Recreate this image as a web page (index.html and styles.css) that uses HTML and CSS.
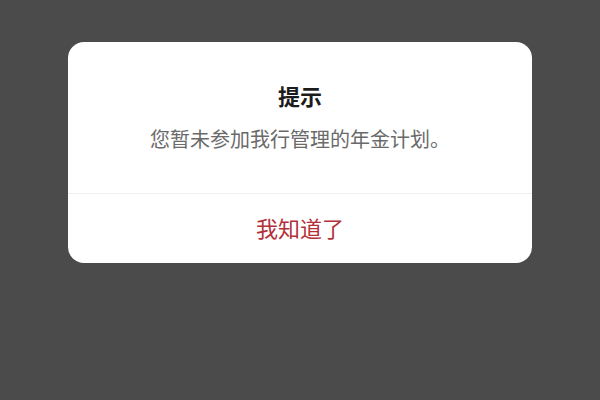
FILE: index.html
```html
<!DOCTYPE html>
<html lang="zh-CN">
<head>
<meta charset="utf-8">
<link rel="stylesheet" href="styles.css">
</head>
<body>
<div class="screen">
  <div class="dialog">
    <div class="dialog-content">
      <div class="dialog-title">提示</div>
      <div class="dialog-message">您暂未参加我行管理的年金计划。</div>
    </div>
    <div class="dialog-action">我知道了</div>
  </div>
</div>
</body>
</html>
```
FILE: styles.css
```css
html, body {
  margin: 0;
  padding: 0;
}
body {
  background: #4b4b4b;
  font-family: "Noto Sans CJK SC", "Noto Sans", sans-serif;
  width: 600px;
  height: 400px;
  overflow: hidden;
}
.screen {
  display: flex;
  justify-content: center;
  padding-top: 42px;
}
.dialog {
  width: 464px;
  height: 221px;
  background: #ffffff;
  border-radius: 16px;
  display: flex;
  flex-direction: column;
  overflow: hidden;
}
.dialog-content {
  display: flex;
  flex-direction: column;
  align-items: center;
  padding-top: 38px;
  height: 152px;
  box-sizing: border-box;
  border-bottom: 1px solid #efefef;
}
.dialog-title {
  font-size: 22px;
  line-height: 30px;
  font-weight: 700;
  color: #1c1c1c;
}
.dialog-message {
  margin-top: 15px;
  font-size: 20px;
  line-height: 28px;
  color: #6a6a6a;
}
.dialog-action {
  flex: 1;
  display: flex;
  align-items: center;
  justify-content: center;
  padding-bottom: 4px;
  font-size: 22px;
  color: #b3303a;
}
```
